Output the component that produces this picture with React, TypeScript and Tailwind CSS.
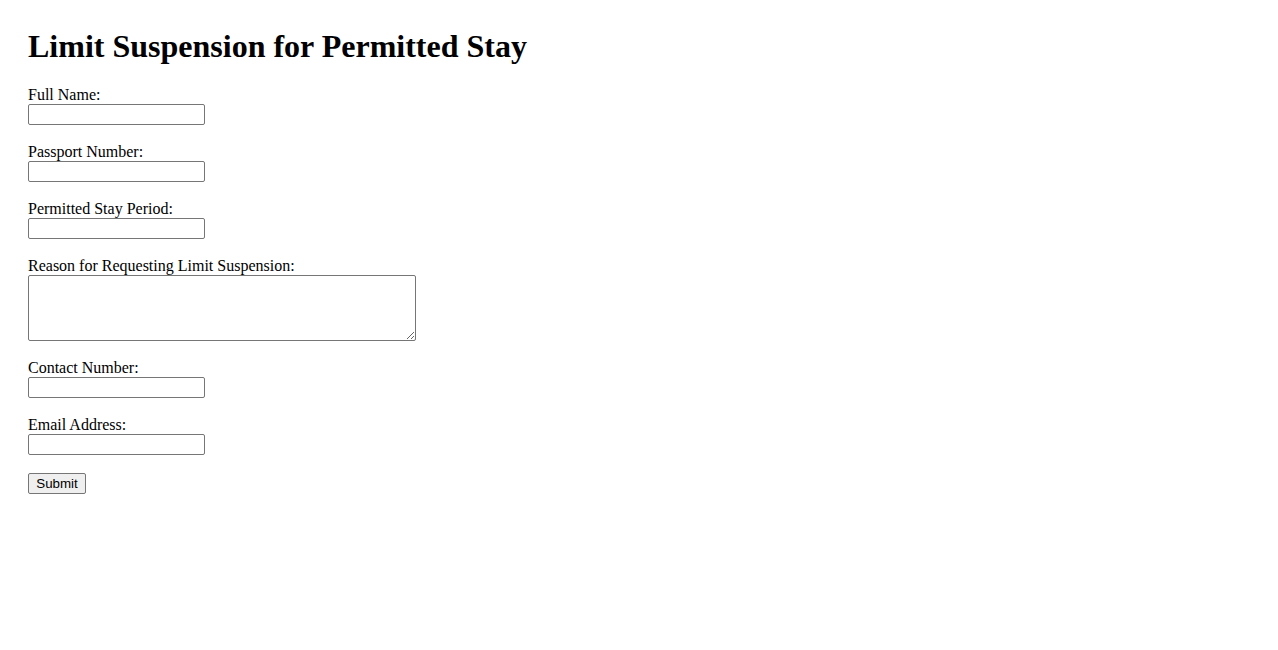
import React from "react";

const inputCls =
  "block w-[177px] h-[21px] border border-[#767676] rounded-[2px] px-[2px] py-[1px] bg-white text-[13.33px] [font-family:'Liberation_Sans',Arial,sans-serif] outline-none";

function Field({ label }: { label: string }) {
  return (
    <div className="mb-[18px]">
      <label className="block h-[18px] leading-[18px]">{label}</label>
      <input type="text" className={inputCls} />
    </div>
  );
}

export default function App() {
  return (
    <div className="min-h-[650px] bg-white text-black p-[28px] [font-family:'Liberation_Serif','Times_New_Roman',serif] text-[16px]">
      <h1 className="text-[32px] font-bold leading-[37px] mb-[21px]">
        Limit Suspension for Permitted Stay
      </h1>
      <form onSubmit={(e) => e.preventDefault()}>
        <Field label="Full Name:" />
        <Field label="Passport Number:" />
        <Field label="Permitted Stay Period:" />
        <div className="mb-[18px]">
          <label className="block h-[18px] leading-[18px]">
            Reason for Requesting Limit Suspension:
          </label>
          <textarea className="block w-[388px] h-[66px] border border-[#767676] rounded-[2px] px-[2px] py-[2px] bg-white text-[13.33px] [font-family:'Liberation_Mono',monospace] outline-none" />
        </div>
        <Field label="Contact Number:" />
        <Field label="Email Address:" />
        <button
          type="submit"
          className="block w-[58px] h-[21px] bg-[#efefef] border border-[#767676] rounded-[2px] text-[13.33px] leading-[15px] [font-family:'Liberation_Sans',Arial,sans-serif] text-black"
        >
          Submit
        </button>
      </form>
    </div>
  );
}
